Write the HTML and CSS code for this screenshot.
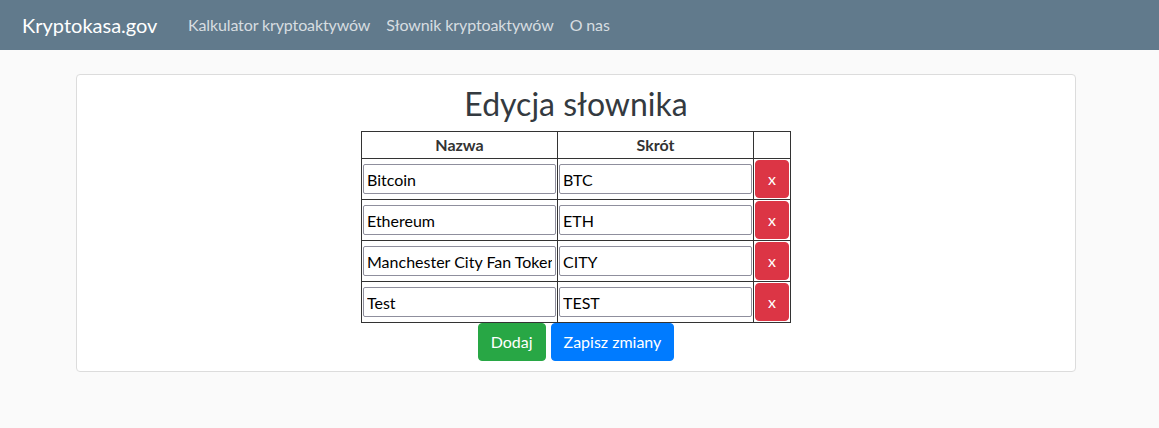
FILE: index.html
```html
<!DOCTYPE html>
<html lang="pl">
<head>
<meta charset="utf-8">
<title>Kryptokasa.gov</title>
<link rel="stylesheet" href="styles.css">
</head>
<body>
<nav class="navbar">
  <a class="brand" href="#">Kryptokasa.gov</a>
  <ul class="nav-links">
    <li><a href="#">Kalkulator kryptoaktywów</a></li>
    <li><a href="#">Słownik kryptoaktywów</a></li>
    <li><a href="#">O nas</a></li>
  </ul>
</nav>
<main class="card">
  <h2 class="title">Edycja słownika</h2>
  <table class="dict">
    <thead>
      <tr><th>Nazwa</th><th>Skrót</th><th></th></tr>
    </thead>
    <tbody>
      <tr>
        <td><input class="field" type="text" value="Bitcoin"></td>
        <td><input class="field" type="text" value="BTC"></td>
        <td><button class="btn btn-danger">x</button></td>
      </tr>
      <tr>
        <td><input class="field" type="text" value="Ethereum"></td>
        <td><input class="field" type="text" value="ETH"></td>
        <td><button class="btn btn-danger">x</button></td>
      </tr>
      <tr>
        <td><input class="field" type="text" value="Manchester City Fan Token"></td>
        <td><input class="field" type="text" value="CITY"></td>
        <td><button class="btn btn-danger">x</button></td>
      </tr>
      <tr>
        <td><input class="field" type="text" value="Test"></td>
        <td><input class="field" type="text" value="TEST"></td>
        <td><button class="btn btn-danger">x</button></td>
      </tr>
    </tbody>
  </table>
  <div class="actions">
    <button class="btn btn-success">Dodaj</button>
    <button class="btn btn-primary">Zapisz zmiany</button>
  </div>
</main>
</body>
</html>
```
FILE: styles.css
```css
* { box-sizing: border-box; }
html, body {
  margin: 0;
  padding: 0;
}
body {
  background: #fafafa;
  font-family: Lato, "Open Sans", sans-serif;
  font-size: 16px;
  color: #212529;
}
.navbar {
  height: 50px;
  background: #617a8c;
  display: flex;
  align-items: center;
  padding: 0 0 0 22px;
}
.brand {
  width: 158px;
  font-size: 20px;
  color: #fff;
  text-decoration: none;
  line-height: 30px;
}
.nav-links {
  display: flex;
  list-style: none;
  margin: 0;
  padding: 0;
}
.nav-links a {
  display: block;
  padding: 0 8px;
  color: rgba(255, 255, 255, 0.75);
  text-decoration: none;
  font-size: 16px;
  line-height: 24px;
  letter-spacing: -0.12px;
}
.card {
  display: flex;
  flex-direction: column;
  align-items: center;
  width: 1000px;
  margin: 24px 0 0 76px;
  padding: 10px;
  background: #fff;
  border: 1px solid #dcdcdc;
  border-radius: 4px;
}
.title {
  margin: 0 0 8px;
  font-size: 32px;
  font-weight: 400;
  line-height: 38px;
  color: #343a40;
}
.dict {
  border-collapse: collapse;
  border: 1px solid #333;
}
.dict th,
.dict td {
  border: 1px solid #333;
}
.dict th {
  height: 26px;
  padding: 0;
  font-weight: 700;
  line-height: 26px;
  color: #333;
}
.dict td {
  padding: 1px;
  vertical-align: middle;
}
.field {
  display: block;
  width: 193px;
  height: 30px;
  padding: 0 3px;
  border: 1px solid #8f8f9d;
  border-radius: 2px;
  font-family: Lato, "Open Sans", sans-serif;
  font-size: 16px;
  color: #000;
  background: #fff;
}
.btn {
  display: inline-block;
  padding: 6px 12px;
  border: 1px solid transparent;
  border-radius: 4px;
  font-family: Lato, "Open Sans", sans-serif;
  font-size: 16px;
  line-height: 24px;
  color: #fff;
  cursor: pointer;
}
.dict .btn {
  display: block;
  width: 34px;
  padding: 6px 0;
  text-align: center;
}
.btn-danger { background: #dc3545; border-color: #dc3545; }
.btn-success { background: #28a745; border-color: #28a745; }
.btn-primary { background: #007bff; border-color: #007bff; }
.actions {
  display: flex;
  gap: 5px;
  justify-content: center;
}
```
